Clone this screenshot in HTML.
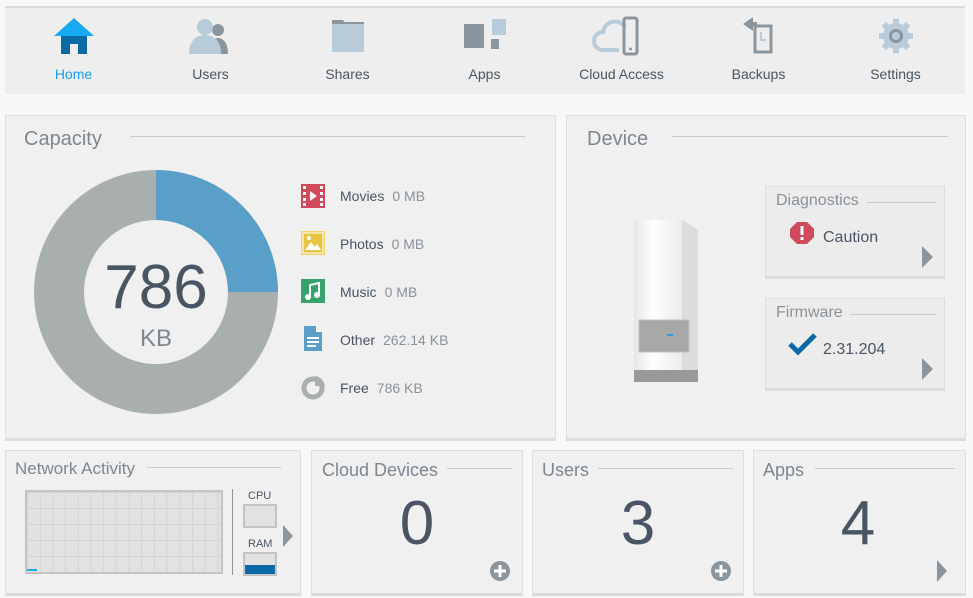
<!DOCTYPE html>
<html><head><meta charset="utf-8"><style>
*{box-sizing:border-box;margin:0;padding:0}
body{width:973px;height:598px;background:#f8f8f8;font-family:"Liberation Sans",sans-serif;position:relative;overflow:hidden;color:#4a5563}
.abs{position:absolute}
.nav{left:5px;top:6px;width:960px;height:88px;background:#eeeeee;border-top:2px solid #dcdcdc}
.ni{position:absolute;top:0;width:137px;text-align:center;font-size:14px;color:#4a5563}
.ni svg{position:absolute;left:50%;transform:translateX(-50%);top:10px}
.ni span{position:absolute;left:0;right:0;top:58px}
.panel{background:#f0f0f0;border:1px solid #dedede;border-bottom:3px solid #dcdcdc}
.title{position:absolute;color:#7d8790;font-size:20px}
.line{position:absolute;height:1px;background:#c8cacc}
.leg{position:absolute;left:340px;font-size:14px;color:#4a5563}
.leg b{font-weight:normal;color:#8a929a;margin-left:8px}
.big{position:absolute;font-size:62px;color:#4a5563;text-align:center}
</style></head><body>
<div class="abs nav">
 <div class="ni" style="left:0"><svg width="42" height="36" viewBox="0 0 42 36"><polygon points="21,0 41,18 1,18" fill="#18aaf0"/><path d="M8 18h26v18h-9v-10h-8v10h-9z" fill="#0a6aa6"/></svg><span style="color:#18a0ea">Home</span></div>
 <div class="ni" style="left:137px"><svg width="46" height="36" viewBox="0 0 46 36"><circle cx="30" cy="12" r="6" fill="#8a959e"/><path d="M20 36c0-10 4-16 10-16s10 6 10 16z" fill="#8a959e"/><circle cx="17" cy="9" r="8" fill="#b8cbd8"/><path d="M1 36c0-12 6-19 16-19s16 7 16 19z" fill="#b8cbd8"/></svg><span>Users</span></div>
 <div class="ni" style="left:274px"><svg width="36" height="36" viewBox="0 0 36 36"><path d="M2 2h11l2 3h-13z" fill="#8a959e"/><rect x="2" y="6" width="32" height="28" fill="#b8cbd8"/><rect x="2" y="4" width="32" height="2" fill="#8a959e"/></svg><span>Shares</span></div>
 <div class="ni" style="left:411px"><svg width="44" height="36" viewBox="0 0 44 36"><rect x="1" y="6" width="20" height="24" fill="#8a959e"/><rect x="29" y="1" width="14" height="16" fill="#b8cbd8"/><rect x="28" y="21" width="8" height="10" fill="#8a959e"/></svg><span>Apps</span></div>
 <div class="ni" style="left:548px"><svg width="62" height="40" viewBox="0 0 62 40" style="top:8px"><path d="M28 34H12a9 9 0 0 1 0-18a12 12 0 0 1 22-5" fill="none" stroke="#b8cbd8" stroke-width="4"/><rect x="33" y="2" width="13" height="36" rx="2" fill="none" stroke="#8a959e" stroke-width="3"/><circle cx="39.5" cy="33" r="1.5" fill="#8a959e"/></svg><span>Cloud Access</span></div>
 <div class="ni" style="left:685px"><svg width="36" height="38" viewBox="0 0 36 38" style="top:8px"><path d="M14 10h16v26h-16z" fill="none" stroke="#8a959e" stroke-width="3"/><polygon points="2,8 12,1 12,15" fill="#8a959e"/><rect x="8" y="6" width="8" height="4" fill="#8a959e"/><path d="M20 16v8h5" fill="none" stroke="#b8cbd8" stroke-width="2"/></svg><span>Backups</span></div>
 <div class="ni" style="left:822px"><svg width="36" height="36" viewBox="0 0 36 36"><circle cx="18" cy="18" r="13" fill="#b8cbd8"/><g fill="#b8cbd8"><rect x="15" y="1" width="6" height="34"/><rect x="1" y="15" width="34" height="6"/><rect x="15" y="1" width="6" height="34" transform="rotate(45 18 18)"/><rect x="15" y="1" width="6" height="34" transform="rotate(-45 18 18)"/></g><circle cx="18" cy="18" r="7" fill="#8a959e"/><circle cx="18" cy="18" r="4" fill="#b8cbd8"/></svg><span>Settings</span></div>
</div>

<div class="abs panel" style="left:5px;top:115px;width:551px;height:326px"></div>
<div class="title" style="left:24px;top:128px">Capacity</div>
<div class="line" style="left:130px;top:136px;width:395px"></div>
<svg class="abs" style="left:34px;top:170px" width="244" height="244" viewBox="0 0 244 244">
<circle cx="122" cy="122" r="97" fill="none" stroke="#a8afae" stroke-width="50"/>
<path d="M122 0A122 122 0 0 1 244 122H194A72 72 0 0 0 122 50z" fill="#5a9fc8"/>
<text x="122" y="138" text-anchor="middle" font-size="62" fill="#4a5563" font-family="Liberation Sans">786</text>
<text x="122" y="176" text-anchor="middle" font-size="24" fill="#7d8790" font-family="Liberation Sans">KB</text>
</svg>
<svg class="abs" style="left:301px;top:184px" width="24" height="24"><rect width="24" height="24" fill="#d04a5b"/><g fill="#fff"><rect x="2" y="2" width="3" height="3"/><rect x="2" y="8" width="3" height="3"/><rect x="2" y="14" width="3" height="3"/><rect x="2" y="19" width="3" height="3"/><rect x="19" y="2" width="3" height="3"/><rect x="19" y="8" width="3" height="3"/><rect x="19" y="14" width="3" height="3"/><rect x="19" y="19" width="3" height="3"/><polygon points="9,7 16,12 9,17"/></g></svg>
<div class="leg" style="top:188px">Movies<b>0 MB</b></div>
<svg class="abs" style="left:301px;top:231px" width="24" height="24"><rect width="24" height="24" fill="#f2d36a"/><rect x="2" y="2" width="20" height="20" fill="#e7c443" stroke="#fff" stroke-width="1"/><polygon points="4,19 10,11 14,16 16,13 20,19" fill="#fff"/><circle cx="8" cy="7" r="2" fill="#fff"/></svg>
<div class="leg" style="top:236px">Photos<b>0 MB</b></div>
<svg class="abs" style="left:301px;top:279px" width="24" height="24"><rect width="24" height="24" fill="#35a36b"/><path d="M9 18V6l9-2v12" fill="none" stroke="#fff" stroke-width="2"/><circle cx="7" cy="18" r="3" fill="#fff"/><circle cx="16" cy="16" r="3" fill="#fff"/></svg>
<div class="leg" style="top:284px">Music<b>0 MB</b></div>
<svg class="abs" style="left:304px;top:326px" width="18" height="25"><path d="M0 0h12l6 6v19h-18z" fill="#5a9fc8"/><path d="M12 0v6h6" fill="#fff"/><g fill="#fff"><rect x="3" y="11" width="12" height="2"/><rect x="3" y="15" width="12" height="2"/><rect x="3" y="19" width="9" height="2"/></g></svg>
<div class="leg" style="top:332px">Other<b>262.14 KB</b></div>
<svg class="abs" style="left:301px;top:375px" width="25" height="25"><circle cx="12" cy="13" r="9" fill="none" stroke="#a8afae" stroke-width="5"/><path d="M14 1a12 12 0 0 1 10 10h-10z" fill="#a8afae"/></svg>
<div class="leg" style="top:380px">Free<b>786 KB</b></div>

<div class="abs panel" style="left:566px;top:115px;width:400px;height:326px"></div>
<div class="title" style="left:587px;top:128px">Device</div>
<div class="line" style="left:672px;top:136px;width:276px"></div>
<svg class="abs" style="left:633px;top:218px" width="66" height="166"><defs><linearGradient id="g" x1="0" x2="1"><stop offset="0" stop-color="#e6e6e6"/><stop offset=".3" stop-color="#fff"/><stop offset="1" stop-color="#e0e0e0"/></linearGradient></defs><path d="M1 2h48l16 10v152h-64z" fill="url(#g)"/><path d="M49 2l16 10v152h-16z" fill="#dcdcdc"/><rect x="6" y="102" width="50" height="32" fill="#a8a8a8"/><rect x="6" y="102" width="50" height="32" fill="none" stroke="#c0c0c0"/><rect x="34" y="116" width="6" height="2" fill="#2aa0e0"/><rect x="1" y="152" width="64" height="12" fill="#999"/></svg>
<div class="abs panel" style="left:765px;top:186px;width:180px;height:93px;background:#ececec"></div>
<div class="abs" style="left:776px;top:192px;font-size:16px;color:#8a929a">Diagnostics</div>
<div class="line" style="left:867px;top:202px;width:69px"></div>
<svg class="abs" style="left:790px;top:222px" width="24" height="22"><polygon points="7,0 17,0 24,7 24,15 17,22 7,22 0,15 0,7" fill="#d04a5b"/><rect x="10.5" y="4" width="3" height="9" fill="#fff"/><rect x="10.5" y="15" width="3" height="3" fill="#fff"/></svg>
<div class="abs" style="left:823px;top:229px;font-size:16px;color:#4a5563">Caution</div>
<svg class="abs" style="left:922px;top:246px" width="12" height="22"><polygon points="0,0 11,11 0,22" fill="#8a959e"/></svg>
<div class="abs panel" style="left:765px;top:298px;width:180px;height:93px;background:#ececec"></div>
<div class="abs" style="left:776px;top:304px;font-size:16px;color:#8a929a">Firmware</div>
<div class="line" style="left:850px;top:314px;width:86px"></div>
<svg class="abs" style="left:788px;top:332px" width="30" height="24"><path d="M2 12l8 8L27 3" fill="none" stroke="#0a6aa6" stroke-width="5"/></svg>
<div class="abs" style="left:823px;top:341px;font-size:16px;color:#4a5563">2.31.204</div>
<svg class="abs" style="left:922px;top:358px" width="12" height="22"><polygon points="0,0 11,11 0,22" fill="#8a959e"/></svg>

<div class="abs panel" style="left:5px;top:450px;width:296px;height:146px"></div>
<div class="title" style="left:15px;top:459px;font-size:17px">Network Activity</div>
<div class="line" style="left:147px;top:467px;width:134px"></div>
<div class="abs" style="left:25px;top:490px;width:198px;height:84px;border:2px solid #c4c4c4;background-color:#e2e2e2;background-image:linear-gradient(#d4d4d4 1px,transparent 1px),linear-gradient(90deg,#d4d4d4 1px,transparent 1px);background-size:12.7px 16px"></div>
<div class="abs" style="left:27px;top:569px;width:10px;height:2px;background:#18aaf0"></div>
<div class="abs" style="left:232px;top:489px;width:1px;height:86px;background:#8a959e"></div>
<div class="abs" style="left:248px;top:490px;font-size:11px;color:#4a5563">CPU</div>
<div class="abs" style="left:243px;top:504px;width:34px;height:24px;border:2px solid #c4c4c4;background:#e2e2e2"></div>
<div class="abs" style="left:248px;top:538px;font-size:11px;color:#4a5563">RAM</div>
<div class="abs" style="left:243px;top:552px;width:34px;height:24px;border:2px solid #c4c4c4;background:#e2e2e2"></div>
<div class="abs" style="left:245px;top:565px;width:30px;height:9px;background:#0a6aa6"></div>
<svg class="abs" style="left:283px;top:525px" width="10" height="22"><polygon points="0,0 10,11 0,22" fill="#8a959e"/></svg>

<div class="abs panel" style="left:311px;top:450px;width:212px;height:146px"></div>
<div class="title" style="left:322px;top:460px;font-size:18px">Cloud Devices</div>
<div class="line" style="left:447px;top:468px;width:65px"></div>
<div class="big" style="left:311px;top:488px;width:212px">0</div>
<svg class="abs" style="left:490px;top:561px" width="20" height="20"><circle cx="10" cy="10" r="10" fill="#8a959e"/><rect x="4" y="8.5" width="12" height="3" fill="#fff"/><rect x="8.5" y="4" width="3" height="12" fill="#fff"/></svg>

<div class="abs panel" style="left:532px;top:450px;width:212px;height:146px"></div>
<div class="title" style="left:542px;top:460px;font-size:18px">Users</div>
<div class="line" style="left:598px;top:468px;width:135px"></div>
<div class="big" style="left:532px;top:488px;width:212px">3</div>
<svg class="abs" style="left:711px;top:561px" width="20" height="20"><circle cx="10" cy="10" r="10" fill="#8a959e"/><rect x="4" y="8.5" width="12" height="3" fill="#fff"/><rect x="8.5" y="4" width="3" height="12" fill="#fff"/></svg>

<div class="abs panel" style="left:753px;top:450px;width:213px;height:146px"></div>
<div class="title" style="left:763px;top:460px;font-size:18px">Apps</div>
<div class="line" style="left:815px;top:468px;width:140px"></div>
<div class="big" style="left:753px;top:488px;width:210px">4</div>
<svg class="abs" style="left:937px;top:560px" width="10" height="22"><polygon points="0,0 10,11 0,22" fill="#8a959e"/></svg>
</body></html>
